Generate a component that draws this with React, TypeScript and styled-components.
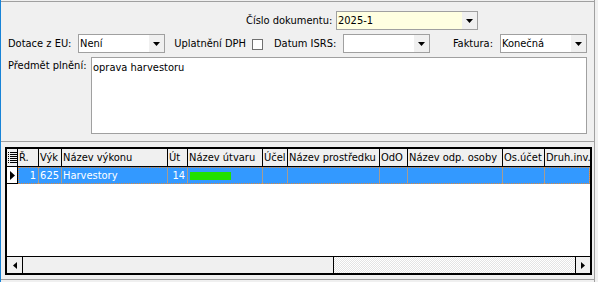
import React from "react";
import styled, { createGlobalStyle } from "styled-components";

const FONT = `"DejaVu Sans Condensed", "DejaVu Sans", sans-serif`;
const COLS = "11px 21px 23px 106px 20px 75px 25px 92px 28px 95px 42px 45px";

const Global = createGlobalStyle`
  html, body { margin: 0; padding: 0; background: #f0f0f0; }
  body {
    font-family: ${FONT};
    font-stretch: semi-condensed;
    font-size: 11px;
    color: #000;
  }
  * { box-sizing: border-box; }
`;

const Window = styled.div`
  width: 598px;
  height: 282px;
  background: #f0f0f0;
  border-left: 1px solid #1883d7;
  overflow: hidden;
`;

const Frame = styled.div`
  width: 594px;
  height: 100%;
  border-right: 1px solid #a0a0a0;
  padding-top: 1px;
  display: flex;
  flex-direction: column;
`;

const TopPanel = styled.div`
  height: 140px;
  border-top: 1px solid #a0a0a0;
  padding-top: 9px;
  display: flex;
  flex-direction: column;
  gap: 4px;
`;

const FormRow = styled.div<{ $cols: string; $pad: number }>`
  display: grid;
  grid-template-columns: ${(p) => p.$cols};
  padding-left: ${(p) => p.$pad}px;
  align-items: center;
`;

const Label = styled.span<{ $align?: string; $pl?: number; $pr?: number; $top?: boolean }>`
  white-space: nowrap;
  text-align: ${(p) => p.$align || "left"};
  padding-left: ${(p) => p.$pl || 0}px;
  padding-right: ${(p) => p.$pr || 0}px;
  align-self: ${(p) => (p.$top ? "start" : "center")};
  margin-top: ${(p) => (p.$top ? 2 : 0)}px;
  overflow: hidden;
`;

const Combo = styled.div<{ $bg?: string }>`
  height: 19px;
  border: 1px solid #a0a0a0;
  background: ${(p) => p.$bg || "#fff"};
  display: flex;
  align-items: stretch;
`;

const ComboText = styled.span`
  flex: 1;
  padding-left: 1px;
  line-height: 17px;
  white-space: nowrap;
  overflow: hidden;
`;

const ComboButton = styled.span`
  width: 15px;
  background: #f0f0f0;
  display: flex;
  align-items: center;
  justify-content: center;
`;

const CheckBox = styled.span`
  width: 11px;
  height: 11px;
  margin-top: 1px;
  border: 1px solid #707070;
  background: #fff;
`;

const TextArea = styled.div`
  height: 77px;
  border: 1px solid #a0a0a0;
  background: #fff;
  padding: 3px 1px;
`;

const GridPanel = styled.div`
  border-top: 1px solid #a0a0a0;
  border-bottom: 1px solid #a0a0a0;
  padding: 5px 0 4px 4px;
`;

const Grid = styled.div`
  width: 587px;
  height: 128px;
  border: 2px solid #000;
  background: #fff;
  display: flex;
  flex-direction: column;
`;

const HeaderRow = styled.div`
  display: grid;
  grid-template-columns: ${COLS};
  height: 18px;
  border-bottom: 1px solid #000;
  background: #f0f0f0;
`;

const HeaderCell = styled.div`
  border-right: 1px solid #000;
  padding-left: 1px;
  line-height: 17px;
  white-space: nowrap;
  overflow: hidden;
  display: flex;
  align-items: center;
  &:last-child { border-right: none; }
`;

const DataRow = styled.div`
  position: relative;
  display: grid;
  grid-template-columns: ${COLS};
  height: 17px;
`;

const Indicator = styled.div`
  background: #fff;
  border-right: 1px solid #000;
  border-bottom: 1px solid #000;
  display: flex;
  align-items: center;
  justify-content: center;
`;

const Cell = styled.div<{ $right?: boolean }>`
  background: #3399ff;
  color: #fff;
  border-right: 1px solid #a89c90;
  line-height: 17px;
  white-space: nowrap;
  overflow: hidden;
  text-align: ${(p) => (p.$right ? "right" : "left")};
  padding: 0 2px 0 1px;
  &:last-child { border-right: none; }
`;

const Redacted = styled.span`
  display: inline-block;
  width: 41px;
  height: 8px;
  margin-left: 1px;
  vertical-align: -1px;
  background: #22e000;
`;

const FocusRect = styled.div`
  position: absolute;
  left: 11px;
  right: 0;
  top: 0;
  bottom: 0;
  border: 1px dotted #e0883a;
  pointer-events: none;
`;

const Body = styled.div`
  flex: 1;
  background: #fff;
`;

const HScroll = styled.div`
  height: 17px;
  border-top: 1px solid #000;
  display: flex;
`;

const ScrollButton = styled.div<{ $side: "left" | "right"; $w: number }>`
  width: ${(p) => p.$w}px;
  background: #f0f0f0;
  border-${(p) => (p.$side === "left" ? "right" : "left")}: 1px solid #000;
  display: flex;
  align-items: center;
  justify-content: center;
`;

const Thumb = styled.div`
  width: 311px;
  background: #f0f0f0;
  border-right: 1px solid #000;
`;

const Track = styled.div`
  flex: 1;
  background: repeating-conic-gradient(#ffffff 0% 25%, #e4e4e4 0% 50%) 0 0 / 2px 2px;
`;

const DownArrow = () => (
  <svg width="7" height="4" viewBox="0 0 7 4">
    <polygon points="0,0 7,0 3.5,4" fill="#000" />
  </svg>
);

const ListIcon = () => (
  <svg width="9" height="11" viewBox="0 0 9 11">
    {[0, 2, 4, 6, 8, 10].map((y) => (
      <g key={y}>
        <rect x="0" y={y} width="1" height="1" fill="#000" />
        <rect x="2" y={y} width="7" height="1" fill="#000" />
      </g>
    ))}
  </svg>
);

const RowArrow = () => (
  <svg width="5" height="9" viewBox="0 0 5 9">
    <polygon points="0,0 5,4.5 0,9" fill="#000" />
  </svg>
);

const LeftArrow = () => (
  <svg width="4" height="7" viewBox="0 0 4 7">
    <polygon points="4,0 0,3.5 4,7" fill="#000" />
  </svg>
);

const RightArrow = () => (
  <svg width="4" height="7" viewBox="0 0 4 7">
    <polygon points="0,0 4,3.5 0,7" fill="#000" />
  </svg>
);

const ComboBox = ({ value, bg }: { value: string; bg?: string }) => (
  <Combo $bg={bg}>
    <ComboText>{value}</ComboText>
    <ComboButton>
      <DownArrow />
    </ComboButton>
  </Combo>
);

const headers = [
  "Ř.",
  "Výk",
  "Název výkonu",
  "Út",
  "Název útvaru",
  "Účel",
  "Název prostředku",
  "OdO",
  "Název odp. osoby",
  "Os.účet",
  "Druh.inv.",
];

export default function App() {
  return (
    <>
      <Global />
      <Window>
        <Frame>
          <TopPanel>
            <FormRow $cols="90px 142px" $pad={245}>
              <Label>Číslo dokumentu:</Label>
              <ComboBox value="2025-1" bg="#ffffe1" />
            </FormRow>
            <FormRow $cols="70px 87px 87px 12px 79px 87px 70px 87px" $pad={7}>
              <Label>Dotace z EU:</Label>
              <ComboBox value="Není" />
              <Label $align="right" $pr={6}>Uplatnění DPH</Label>
              <CheckBox />
              <Label $pl={10}>Datum ISRS:</Label>
              <ComboBox value="" />
              <Label $align="right" $pr={7}>Faktura:</Label>
              <ComboBox value="Konečná" />
            </FormRow>
            <FormRow $cols="83px 496px" $pad={7}>
              <Label $top>Předmět plnění:</Label>
              <TextArea>oprava harvestoru</TextArea>
            </FormRow>
          </TopPanel>
          <GridPanel>
            <Grid>
              <HeaderRow>
                <HeaderCell>
                  <ListIcon />
                </HeaderCell>
                {headers.map((h) => (
                  <HeaderCell key={h}>{h}</HeaderCell>
                ))}
              </HeaderRow>
              <DataRow>
                <Indicator>
                  <RowArrow />
                </Indicator>
                <Cell $right>1</Cell>
                <Cell $right>625</Cell>
                <Cell>Harvestory</Cell>
                <Cell $right>14</Cell>
                <Cell>
                  <Redacted />
                </Cell>
                <Cell />
                <Cell />
                <Cell />
                <Cell />
                <Cell />
                <Cell />
                <FocusRect />
              </DataRow>
              <Body />
              <HScroll>
                <ScrollButton $side="left" $w={16}>
                  <LeftArrow />
                </ScrollButton>
                <Thumb />
                <Track />
                <ScrollButton $side="right" $w={15}>
                  <RightArrow />
                </ScrollButton>
              </HScroll>
            </Grid>
          </GridPanel>
        </Frame>
      </Window>
    </>
  );
}
